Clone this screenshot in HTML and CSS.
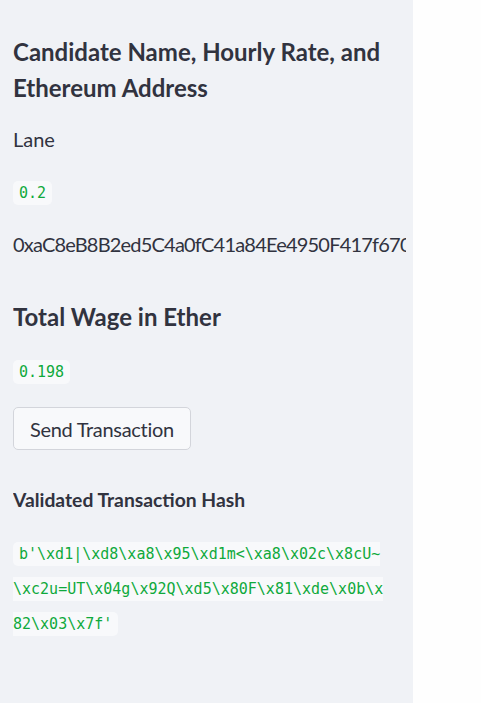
FILE: index.html
```html
<!DOCTYPE html>
<html lang="en">
<head>
<meta charset="utf-8">
<title>Sidebar</title>
<link rel="stylesheet" href="styles.css">
</head>
<body>
<div class="app">
  <aside class="sidebar">
    <div class="clip">
      <div class="content">
        <h3 class="h3 first">Candidate Name, Hourly Rate, and Ethereum Address</h3>
        <p class="txt lane">Lane</p>
        <p class="txt rate"><code class="code">0.2</code></p>
        <p class="txt addr">0xaC8eB8B2ed5C4a0fC41a84Ee4950F417f67029</p>
        <h3 class="h3 wage-title">Total Wage in Ether</h3>
        <p class="txt wage"><code class="code">0.198</code></p>
        <button class="btn" type="button">Send Transaction</button>
        <h4 class="h4">Validated Transaction Hash</h4>
        <p class="txt hash"><code class="code">b'\xd1|\xd8\xa8\x95\xd1m&lt;\xa8\x02c\x8cU~\xc2u=UT\x04g\x92Q\xd5\x80F\x81\xde\x0b\x82\x03\x7f'</code></p>
      </div>
    </div>
  </aside>
  <main class="main"></main>
</div>
</body>
</html>
```
FILE: styles.css
```css
html, body {
  margin: 0;
  padding: 0;
  height: 100%;
}
body {
  font-family: "Lato", "Noto Sans", sans-serif;
  color: #31333f;
  background: #ffffff;
}
.app {
  display: flex;
  height: 703px;
  overflow: hidden;
}
.sidebar {
  width: 413px;
  flex: 0 0 413px;
  background: #f0f2f6;
}
.clip {
  margin-left: 13px;
  width: 393px;
  overflow: hidden;
}
.content {
  width: 372px;
  display: flex;
  flex-direction: column;
  align-items: flex-start;
  padding-top: 34px;
}
.main {
  flex: 1;
  background: #fefefe;
}
.h3 {
  margin: 0;
  font-size: 24px;
  line-height: 36px;
  font-weight: 700;
  color: #31333f;
}
.h4 {
  margin: 34px 0 0;
  font-size: 19.3px;
  line-height: 32px;
  font-weight: 700;
  color: #31333f;
}
.txt {
  margin: 0;
  font-size: 20px;
  line-height: 32px;
  white-space: nowrap;
}
.lane { margin-top: 17px; }
.rate { margin-top: 19px; }
.addr {
  margin-top: 19px;
  letter-spacing: -0.8px;
}
.wage-title { margin-top: 39px; }
.wage { margin-top: 18px; }
.hash {
  margin-top: 19px;
  white-space: normal;
  width: 372px;
}
.code {
  font-family: "DejaVu Sans Mono", monospace;
  font-size: 15px;
  letter-spacing: 0;
  color: #0fa93c;
  background: #f8f9fb;
  padding: 0.2em 0.4em;
  border-radius: 5px;
  word-break: break-all;
}
.btn {
  margin-top: 19px;
  height: 43px;
  padding: 0 16px;
  font-family: "Lato", "Noto Sans", sans-serif;
  font-size: 20px;
  letter-spacing: -0.3px;
  color: #31333f;
  background: #f8f9fb;
  border: 1px solid #d3d5db;
  border-radius: 5px;
}
```
